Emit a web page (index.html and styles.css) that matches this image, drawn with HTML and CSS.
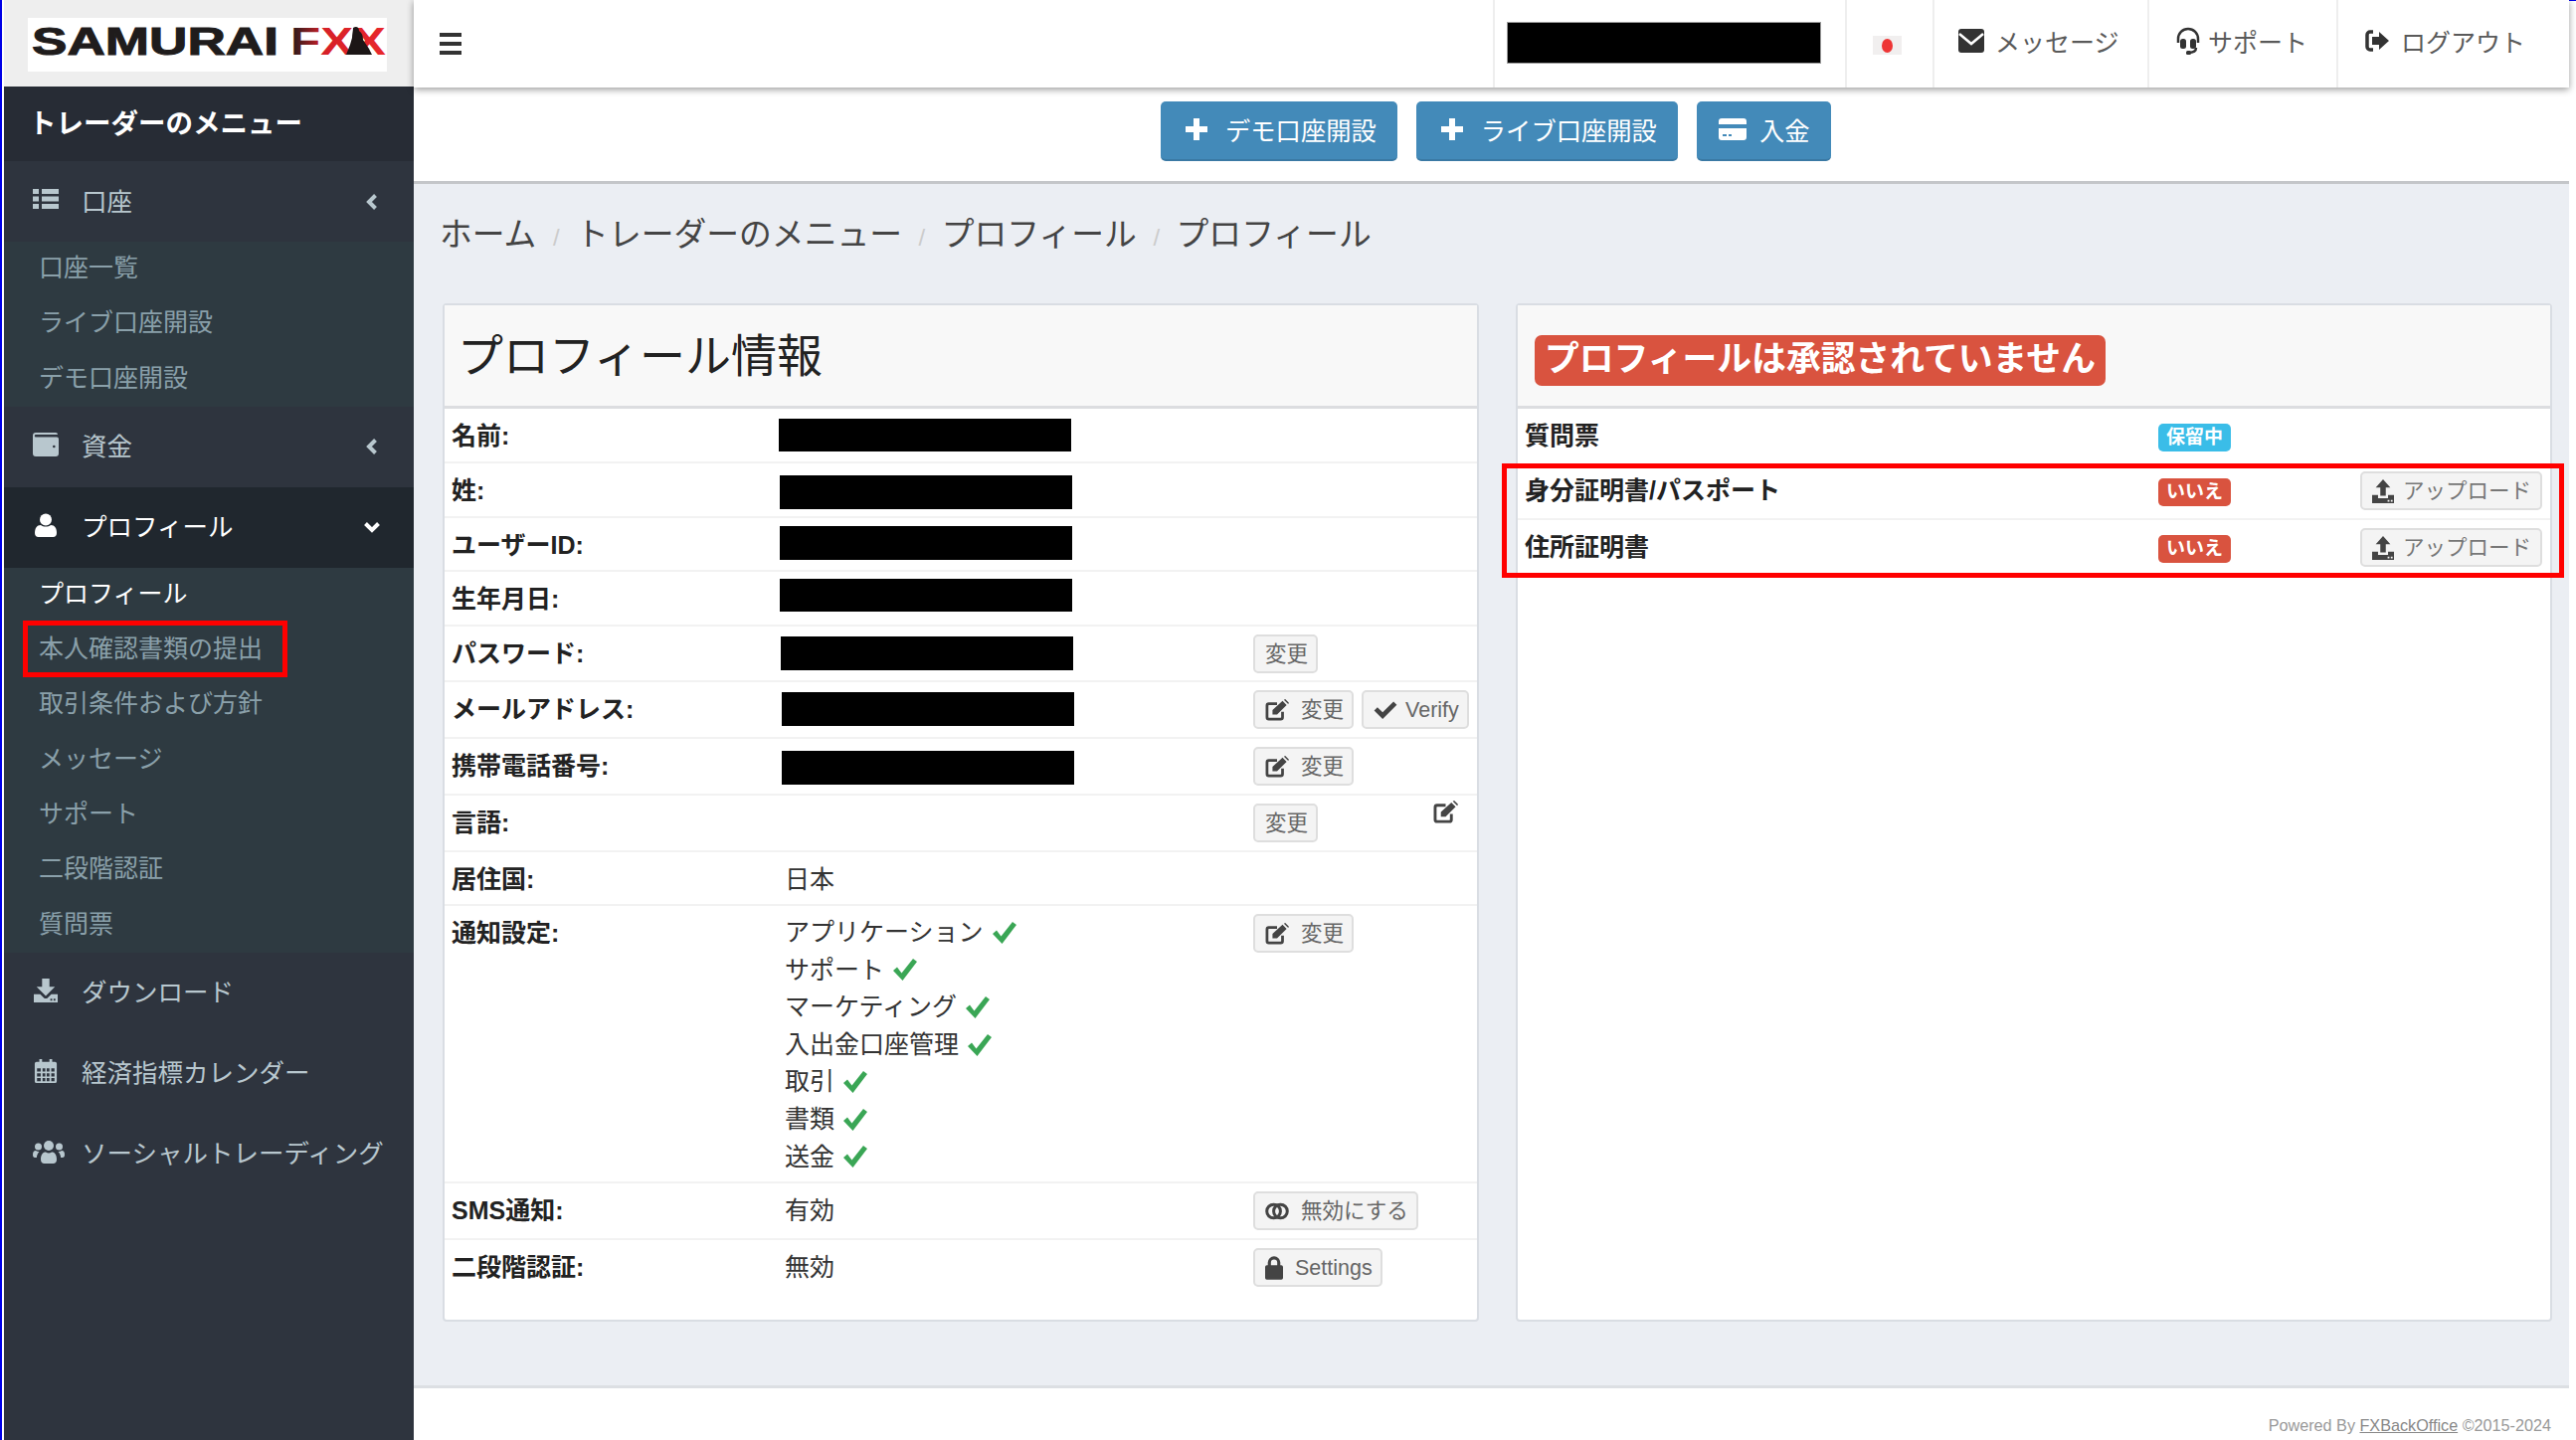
FILE: index.html
```html
<!DOCTYPE html>
<html lang="ja">
<head>
<meta charset="utf-8">
<title>プロフィール</title>
<link rel="stylesheet" href="styles.css">
</head>
<body>
<svg class="sprite" xmlns="http://www.w3.org/2000/svg">
  <symbol id="i-list" viewBox="0 0 26 20"><path d="M0 0h6v5H0zM9 0h17v5H9zM0 7.500h6v5H0zM9 7.500h17v5H9zM0 15h6v5H0zM9 15h17v5H9z"/></symbol>
  <symbol id="i-wallet" viewBox="0 0 26 24"><path fill-rule="evenodd" d="M3 0h20a2 2 0 0 1 2 2H3a1.200 1.200 0 0 0 0 2.500h21a2 2 0 0 1 2 2V21a3 3 0 0 1-3 3H3a3 3 0 0 1-3-3V3a3 3 0 0 1 3-3zM20 14a1.300 1.300 0 1 0 2.600 0a1.300 1.300 0 1 0-2.600 0z"/></symbol>
  <symbol id="i-user" viewBox="0 0 24 24"><circle cx="12" cy="6.500" r="6"/><path d="M1 20c0-5 2-8 6-8 1.400 1 3.100 1.500 5 1.500s3.600-.5 5-1.500c4 0 6 3 6 8 0 2.500-1.500 4-3.500 4h-15C2.500 24 1 22.500 1 20z"/></symbol>
  <symbol id="i-down" viewBox="0 0 26 26"><path d="M9 0h8v9h6L13 19 3 9h6z"/><path fill-rule="evenodd" d="M0 17h7l3.500 3.500a3.500 3.500 0 0 0 5 0L19 17h7v9H0zM18 22h2v2h-2zM21.500 22h2v2h-2z"/></symbol>
  <symbol id="i-cal" viewBox="0 0 24 26"><path fill-rule="evenodd" d="M5 0h3v3h8V0h3v3h3a2 2 0 0 1 2 2v19a2 2 0 0 1-2 2H2a2 2 0 0 1-2-2V5a2 2 0 0 1 2-2h3zM2.500 10v3.500h4V10zM8.500 10v3.500h3V10zM13 10v3.500h3V10zM18 10v3.500h3.500V10zM2.500 15.500V19h4v-3.500zM8.500 15.500V19h3v-3.500zM13 15.500V19h3v-3.500zM18 15.500V19h3.500v-3.500zM2.500 20.500V24h4v-3.500zM8.500 20.500V24h3v-3.500zM13 20.500V24h3v-3.500zM18 20.500V24h3.500v-3.500z"/></symbol>
  <symbol id="i-users" viewBox="0 0 32 24"><circle cx="16" cy="6" r="5"/><circle cx="5.500" cy="7" r="3.500"/><circle cx="26.500" cy="7" r="3.500"/><path d="M8 20c0-5 2-7.500 5-7.500 1 .6 2 .9 3 .9s2-.3 3-.9c3 0 5 2.500 5 7.500 0 2.500-1.500 4-3.500 4h-9C9.500 24 8 22.500 8 20z"/><path d="M0 15c0-2.500 1-4 3-4 1 .8 2.300 1.200 3.500 1-1.500 1.500-2.500 3.500-2.600 6H2c-1.200 0-2-.8-2-3zM32 15c0-2.500-1-4-3-4-1 .8-2.300 1.200-3.500 1 1.500 1.500 2.500 3.500 2.600 6H30c1.200 0 2-.8 2-3z"/></symbol>
  <symbol id="i-left" viewBox="0 0 12 18"><path d="M9.500 2.500L3 9l6.500 6.500" fill="none" stroke="currentColor" stroke-width="4"/></symbol>
  <symbol id="i-chev" viewBox="0 0 18 12"><path d="M2.500 2.500L9 9l6.500-6.500" fill="none" stroke="currentColor" stroke-width="4"/></symbol>
  <symbol id="i-mail" viewBox="0 0 26 24"><rect width="26" height="24" rx="3"/><path d="M1 5l12 10L25 5" fill="none" stroke="#fff" stroke-width="2.500"/></symbol>
  <symbol id="i-head" viewBox="0 0 26 28"><path d="M3 16v-4a10 10 0 0 1 20 0v4M21 21c0 3-3 5-8 5" fill="none" stroke="currentColor" stroke-width="2.500"/><rect x="5" y="12" width="6" height="10" rx="2.500"/><rect x="15" y="12" width="6" height="10" rx="2.500"/><rect x="11" y="24" width="5" height="4" rx="1.500"/></symbol>
  <symbol id="i-out" viewBox="0 0 26 24"><path d="M9 3H6a3 3 0 0 0-3 3v12a3 3 0 0 0 3 3h3" fill="none" stroke="currentColor" stroke-width="3.500"/><path d="M15 3l10 9-10 9v-5H8V8h7z"/></symbol>
  <symbol id="i-plus" viewBox="0 0 24 24"><path d="M9 1h6v8h8v6h-8v8H9v-8H1V9h8z"/></symbol>
  <symbol id="i-card" viewBox="0 0 28 22"><path fill-rule="evenodd" d="M3 0h22a3 3 0 0 1 3 3v3H0V3a3 3 0 0 1 3-3zM0 10h28v9a3 3 0 0 1-3 3H3a3 3 0 0 1-3-3zM4 16v2h4v-2zM10 16v2h3v-2z"/></symbol>
  <symbol id="i-edit" viewBox="0 0 26 24"><path d="M19 14v6a2 2 0 0 1-2 2H4a2 2 0 0 1-2-2V7a2 2 0 0 1 2-2h9" fill="none" stroke="currentColor" stroke-width="3"/><path d="M8 12L19 2l4.500 4.500L13 17H8zM20.500 .8L22 0l4 4-.8 1.500z"/></symbol>
  <symbol id="i-check" viewBox="0 0 24 20"><path d="M0 11l3.500-3.500L9 13 20.500 1.500 24 5 9 20z"/></symbol>
  <symbol id="i-ok" viewBox="0 0 26 24"><path d="M1 13l4-3.500 4.500 6L21 1l4 3-14.500 19z"/></symbol>
  <symbol id="i-toggle" viewBox="0 0 28 20"><circle cx="10" cy="10" r="8" fill="none" stroke="currentColor" stroke-width="3.500"/><circle cx="18" cy="10" r="8" fill="none" stroke="currentColor" stroke-width="3.500"/></symbol>
  <symbol id="i-lock" viewBox="0 0 20 26"><path fill-rule="evenodd" d="M3 10V7a7 7 0 0 1 14 0v3h1a2 2 0 0 1 2 2v12a2 2 0 0 1-2 2H2a2 2 0 0 1-2-2V12a2 2 0 0 1 2-2zm3.500 0h7V7a3.500 3.500 0 0 0-7 0z"/></symbol>
  <symbol id="i-up" viewBox="0 0 24 26"><path d="M12 0l8 9h-5v9H9V9H4z"/><path fill-rule="evenodd" d="M0 17h6.500v3.500h11V17H24v9H0zM17 22.500h2v2h-2zM20.500 22.500h2v2h-2z"/></symbol>
</svg>

<div class="page">
  <aside class="side">
    <div class="brand">
      <div class="logo">
        <svg class="logo-svg" viewBox="0 0 361 54" xmlns="http://www.w3.org/2000/svg">
          <defs><linearGradient id="fxg" x1="0" x2="1" y1="0" y2="0"><stop offset="0" stop-color="#1c1a1a"/><stop offset=".35" stop-color="#d62027"/><stop offset="1" stop-color="#e8282c"/></linearGradient></defs>
          <text class="logo-a" x="4" y="37" textLength="248" lengthAdjust="spacingAndGlyphs">SAMURAI</text>
          <text class="logo-b" x="264" y="37" textLength="96" lengthAdjust="spacingAndGlyphs" fill="url(#fxg)">FXX</text>
          <path d="M327 10c3-2 6-1 6 3 3 2 4 5 4 9l6 9 3 6h-26l4-10 2-7c0-4 1-7 1-10z" fill="#1c1616"/>
        </svg>
      </div>
    </div>
    <h2 class="side-title">トレーダーのメニュー</h2>
    <nav class="menu">
      <a class="mi"><svg class="mi-ic"><use href="#i-list"/></svg><span class="mi-t">口座</span><svg class="mi-ar"><use href="#i-left"/></svg></a>
      <ul class="sub">
        <li>口座一覧</li><li>ライブ口座開設</li><li>デモ口座開設</li>
      </ul>
      <a class="mi"><svg class="mi-ic"><use href="#i-wallet"/></svg><span class="mi-t">資金</span><svg class="mi-ar"><use href="#i-left"/></svg></a>
      <a class="mi on"><svg class="mi-ic"><use href="#i-user"/></svg><span class="mi-t">プロフィール</span><svg class="mi-dn"><use href="#i-chev"/></svg></a>
      <ul class="sub">
        <li class="cur">プロフィール</li>
        <li class="marked">本人確認書類の提出</li>
        <li>取引条件および方針</li><li>メッセージ</li><li>サポート</li><li>二段階認証</li><li>質問票</li>
      </ul>
      <a class="mi"><svg class="mi-ic"><use href="#i-down"/></svg><span class="mi-t">ダウンロード</span></a>
      <a class="mi"><svg class="mi-ic"><use href="#i-cal"/></svg><span class="mi-t">経済指標カレンダー</span></a>
      <a class="mi"><svg class="mi-ic"><use href="#i-users"/></svg><span class="mi-t">ソーシャルトレーディング</span></a>
    </nav>
  </aside>

  <div class="main">
    <header class="top">
      <div class="burger"><i></i><i></i><i></i></div>
      <div class="tcell t-mask"><span class="tmask"></span></div>
      <div class="tcell t-flag"><span class="flag"><b></b></span></div>
      <div class="tcell t-msg"><svg class="t-ic"><use href="#i-mail"/></svg>メッセージ</div>
      <div class="tcell t-sup"><svg class="t-ic"><use href="#i-head"/></svg>サポート</div>
      <div class="tcell t-out"><svg class="t-ic"><use href="#i-out"/></svg>ログアウト</div>
    </header>

    <div class="actions">
      <a class="abtn"><svg class="a-ic"><use href="#i-plus"/></svg>デモ口座開設</a>
      <a class="abtn"><svg class="a-ic"><use href="#i-plus"/></svg>ライブ口座開設</a>
      <a class="abtn"><svg class="a-ic a-card"><use href="#i-card"/></svg>入金</a>
    </div>

    <main class="content">
      <ol class="crumbs">
        <li>ホーム</li><li>トレーダーのメニュー</li><li>プロフィール</li><li>プロフィール</li>
      </ol>
      <div class="cols">
        <section class="panel">
          <div class="phead"><h1 class="ptitle">プロフィール情報</h1></div>
          <div class="ptable">
            <div class="row"><b>名前:</b><div><span class="mask m1"></span></div><div></div></div>
            <div class="row"><b>姓:</b><div><span class="mask m2"></span></div><div></div></div>
            <div class="row"><b>ユーザーID:</b><div><span class="mask m3"></span></div><div></div></div>
            <div class="row"><b>生年月日:</b><div><span class="mask m4"></span></div><div></div></div>
            <div class="row"><b>パスワード:</b><div><span class="mask m5"></span></div><div class="act"><a class="btn">変更</a></div></div>
            <div class="row"><b>メールアドレス:</b><div><span class="mask m6"></span></div><div class="act"><a class="btn"><svg class="b-ic"><use href="#i-edit"/></svg>変更</a><a class="btn"><svg class="b-ic b-ck"><use href="#i-check"/></svg>Verify</a></div></div>
            <div class="row"><b>携帯電話番号:</b><div><span class="mask m7"></span></div><div class="act"><a class="btn"><svg class="b-ic"><use href="#i-edit"/></svg>変更</a></div></div>
            <div class="row lang"><b>言語:</b><div></div><div class="act"><a class="btn">変更</a><svg class="lone"><use href="#i-edit"/></svg></div></div>
            <div class="row"><b>居住国:</b><div>日本</div><div></div></div>
            <div class="row"><b>通知設定:</b>
              <ul class="notes">
                <li>アプリケーション<svg class="ok"><use href="#i-ok"/></svg></li>
                <li>サポート<svg class="ok"><use href="#i-ok"/></svg></li>
                <li>マーケティング<svg class="ok"><use href="#i-ok"/></svg></li>
                <li>入出金口座管理<svg class="ok"><use href="#i-ok"/></svg></li>
                <li>取引<svg class="ok"><use href="#i-ok"/></svg></li>
                <li>書類<svg class="ok"><use href="#i-ok"/></svg></li>
                <li>送金<svg class="ok"><use href="#i-ok"/></svg></li>
              </ul>
              <div class="act"><a class="btn"><svg class="b-ic"><use href="#i-edit"/></svg>変更</a></div></div>
            <div class="row"><b>SMS通知:</b><div>有効</div><div class="act"><a class="btn"><svg class="b-ic"><use href="#i-toggle"/></svg>無効にする</a></div></div>
            <div class="row last"><b>二段階認証:</b><div>無効</div><div class="act"><a class="btn"><svg class="b-ic b-lock"><use href="#i-lock"/></svg>Settings</a></div></div>
          </div>
        </section>

        <section class="panel">
          <div class="phead"><span class="alert">プロフィールは承認されていません</span></div>
          <div class="dtable">
            <div class="drow"><b>質問票</b><div><span class="badge info">保留中</span></div><div></div></div>
            <div class="drow"><b>身分証明書/パスポート</b><div><span class="badge no">いいえ</span></div><div><a class="btn up"><svg class="b-ic"><use href="#i-up"/></svg>アップロード</a></div></div>
            <div class="drow last"><b>住所証明書</b><div><span class="badge no">いいえ</span></div><div><a class="btn up"><svg class="b-ic"><use href="#i-up"/></svg>アップロード</a></div></div>
            <div class="redbox"></div>
          </div>
        </section>
      </div>
    </main>

    <footer class="foot">Powered By&nbsp;<a class="foot-link">FXBackOffice</a>&nbsp;©2015-2024</footer>
  </div>
</div>
</body>
</html>
```

FILE: styles.css
```css
*, *::before, *::after { box-sizing: border-box; }
html, body { margin: 0; padding: 0; height: 100%; }
body {
  background: #fff;
  color: #333;
  font-family: "Liberation Sans", "Noto Sans CJK JP", sans-serif;
  font-size: 25px;
  overflow: hidden;
}
.sprite { display: none; }
svg { fill: currentColor; display: block; flex: none; }
ul, ol { list-style: none; margin: 0; padding: 0; }
h1, h2 { margin: 0; }

.page {
  display: flex;
  width: 2590px;
  height: 1448px;
  border-left: 2px solid #0000e6;
  padding-left: 2px;
  position: relative;
}
.page::after {
  content: "";
  position: absolute;
  right: 0;
  top: 0;
  width: 7px;
  height: 1px;
  background: #0000e6;
}

/* sidebar */
.side { width: 412px; flex: none; background: #2e343e; display: flex; flex-direction: column; }
.brand { height: 87px; background: #eee; padding: 18px 0 0 24px; }
.logo { width: 361px; height: 54px; background: #fff; }
.logo-svg { width: 361px; height: 54px; }
.logo-a, .logo-b { font-family: "Liberation Sans", sans-serif; font-weight: 700; font-size: 39px; }
.logo-a { fill: #1f1c1c; stroke: #1f1c1c; stroke-width: 1; }
.side-title {
  height: 75px;
  background: #272c35;
  color: #fff;
  font-size: 27.500px;
  font-weight: 700;
  line-height: 75px;
  padding-left: 25px;
}
.mi {
  display: flex;
  align-items: center;
  height: 81px;
  padding: 0 0 5px 29px;
  color: #b8c7ce;
  font-size: 25.500px;
}
.mi.on { background: #20272e; color: #fff; }
.mi-ic { width: 26px; height: 24px; margin-right: 24px; }
.mi:last-child .mi-ic { width: 32px; margin-right: 18px; }
.mi-t { white-space: nowrap; margin-left: -1px; }
.mi-ar { width: 12px; height: 18px; margin: 5px 36px 0 auto; }
.mi-dn { width: 18px; height: 12px; margin: 5px 33px 0 auto; }
.sub { background: #2e3a41; color: #8aa0aa; padding-left: 35px; }
.sub li { height: 55.300px; line-height: 53px; position: relative; }
.sub .cur { color: #fff; }
.marked::before {
  content: "";
  position: absolute;
  left: -16px;
  top: -2px;
  width: 266px;
  height: 57px;
  border: 5px solid #f00;
}

/* right column */
.main { width: 2167px; flex: none; display: flex; flex-direction: column; background: #ebeef3; }
.top {
  height: 88px;
  background: #fff;
  display: flex;
  align-items: stretch;
  box-shadow: 0 2px 7px rgba(0, 0, 0, .4);
  position: relative;
  z-index: 2;
  color: #5a5a5a;
}
.burger { width: 1085px; padding: 33px 0 0 26px; display: flex; flex-direction: column; gap: 5px; }
.burger i { display: block; width: 22px; height: 4px; background: #333; }
.tcell { display: flex; align-items: center; border-left: 2px solid #eee; white-space: nowrap; padding-bottom: 7px; }
.t-mask { width: 354px; padding: 0 0 3px 12px; }
.tmask { width: 316px; height: 42px; background: #000; border: 1px solid #999; }
.t-flag { width: 88px; padding-left: 26px; }
.flag { width: 29px; height: 19px; background: #f1efef; display: flex; align-items: center; justify-content: center; margin-top: 10px; }
.flag b { width: 11px; height: 14px; border-radius: 50%; background: #ee3535; }
.t-msg { width: 216px; padding-left: 24px; }
.t-sup { width: 190px; padding-left: 26px; }
.t-out { padding-left: 26px; flex: 1; }
.t-ic { width: 26px; height: 24px; margin-right: 11px; color: #333; }
.t-sup .t-ic { width: 26px; height: 28px; margin-right: 7px; }

.actions {
  height: 97px;
  background: #fff;
  border-bottom: 3px solid #c4c6c9;
  padding: 14px 0 0 751px;
  display: flex;
  gap: 19px;
}
.abtn {
  height: 60px;
  display: flex;
  align-items: center;
  padding: 0 21px 3px 24px;
  background: #438ab9;
  border-bottom: 2px solid #3a79a4;
  border-radius: 5px;
  color: #fff;
  font-size: 25.300px;
  white-space: nowrap;
}
.a-ic { width: 24px; height: 24px; margin-right: 17px; }
.a-card { width: 28px; height: 22px; margin: 0 13px 0 -2px; }

.content { flex: 1; min-height: 0; padding: 0 0 0 29px; display: flex; flex-direction: column; }
.crumbs { height: 120px; display: flex; align-items: flex-start; padding-top: 27px; margin-left: -3px; font-size: 32.800px; color: #444; line-height: 48px; }
.crumbs li + li { margin-left: 16.500px; }
.crumbs li + li::before { content: "/"; color: #ccc; font-size: 24px; margin-right: 16.500px; }
.cols { display: grid; grid-template-columns: 1042px 1042px; gap: 37px; height: 1024px; }
.panel {
  background: #fff;
  border: 2px solid #d9dde3;
  border-radius: 4px;
  display: flex;
  flex-direction: column;
}
.phead { height: 104px; flex: none; background: #f8f8f8; border-bottom: 3px solid #dcdde0; padding: 0 0 0 17px; display: flex; align-items: center; }
.ptitle { font-weight: 400; font-size: 46px; color: #222; margin: 0 0 8px -4px; }
.alert {
  height: 51px;
  margin: 10px 0 0 0;
  background: #d9533f;
  border-radius: 7px;
  color: #fff;
  font-weight: 700;
  font-size: 34.800px;
  line-height: 48px;
  padding: 0 10px;
  white-space: nowrap;
}

.ptable {
  display: grid;
  grid-template-rows: 55px 55px 54px 55px 56px 57px 57px 57px 54px 279px 57px 57px;
}
.row {
  display: grid;
  grid-template-columns: 335px 471px 1fr;
  padding: 8px 0 0 7px;
  border-bottom: 2px solid #f2f2f2;
  line-height: 38px;
}
.row.last, .drow.last { border-bottom: 0; }
.row b { color: #222; }
.row > div { min-width: 0; }
.mask { display: block; height: 34px; width: 294px; background: #000; }
.m1 { margin: 2px 0 0 -6px; height: 33px; }
.m2 { margin: 4px 0 0 -5px; }
.m3 { margin: 0 0 0 -5px; }
.m4 { margin: -1px 0 0 -5px; height: 33px; }
.m5 { margin: 2px 0 0 -4px; }
.m6 { margin: 2px 0 0 -3px; }
.m7 { margin: 4px 0 0 -3px; }
.act { display: flex; gap: 8px; align-items: flex-start; position: relative; }
.btn {
  display: inline-flex;
  align-items: center;
  height: 39px;
  padding: 0 8px 0 10px;
  background: #f4f4f4;
  border: 2px solid #dedede;
  border-radius: 5px;
  color: #666;
  font-size: 21.500px;
  white-space: nowrap;
}
.b-ic { width: 24px; height: 22px; margin-right: 12px; color: #444; }
.b-ck { height: 19px; margin-right: 8px; }
.b-lock { width: 18px; height: 24px; margin-right: 12px; }
.lone { position: absolute; left: 181px; top: -3px; width: 25px; height: 23px; color: #444; }
.notes li { display: flex; align-items: center; height: 37.600px; line-height: 37.600px; }
.ok { width: 26px; height: 24px; margin-left: 8px; color: #3aa655; }

.dtable { position: relative; display: grid; grid-template-rows: 55px 57px 58px; }
.drow {
  display: grid;
  grid-template-columns: 637px 203px 1fr;
  padding: 8px 0 0 7px;
  line-height: 38px;
  border-bottom: 2px solid #f2f2f2;
}
.drow:first-child { border-bottom-color: transparent; }
.drow b { color: #222; }
.badge {
  display: flex;
  align-items: center;
  justify-content: center;
  width: 73px;
  height: 28px;
  margin-top: 7px;
  border-radius: 5px;
  color: #fff;
  font-size: 19px;
  font-weight: 700;
}
.info { background: #3abde8; }
.no { background: #d9533f; }
.btn.up { width: 183px; padding: 0 0 0 10px; color: #777; }
.up .b-ic { width: 22px; height: 24px; margin-right: 9px; }
.redbox {
  position: absolute;
  left: -16px;
  right: -14px;
  top: 55px;
  height: 115px;
  border: 5px solid #f00;
}

.foot {
  height: 55px;
  background: #fff;
  border-top: 3px solid #dcdfe3;
  display: flex;
  justify-content: flex-end;
  align-items: flex-start;
  padding: 27px 18px 0 0;
  color: #999;
  font-size: 16.200px;
  line-height: 20px;
}
.foot-link { color: #888; text-decoration: underline; }
```
